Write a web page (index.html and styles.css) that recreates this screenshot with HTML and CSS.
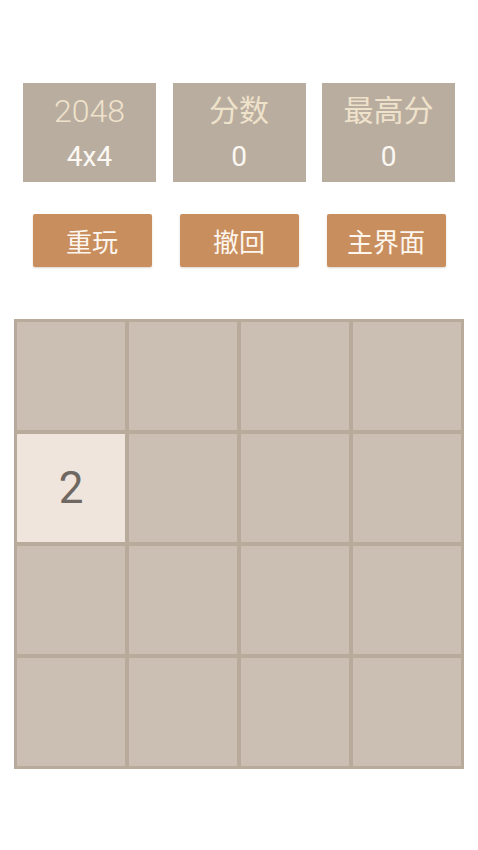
FILE: index.html
```html
<!DOCTYPE html>
<html lang="zh">
<head>
<meta charset="utf-8">
<title>2048</title>
<link rel="stylesheet" href="styles.css">
</head>
<body>
<div class="page">
  <div class="scores">
    <div class="box"><div class="title num">2048</div><div class="value">4x4</div></div>
    <div class="box"><div class="title">分数</div><div class="value">0</div></div>
    <div class="box"><div class="title">最高分</div><div class="value">0</div></div>
  </div>
  <div class="buttons">
    <div class="btn">重玩</div>
    <div class="btn">撤回</div>
    <div class="btn">主界面</div>
  </div>
  <div class="board">
    <div class="cell"></div><div class="cell"></div><div class="cell"></div><div class="cell"></div>
    <div class="cell tile2">2</div><div class="cell"></div><div class="cell"></div><div class="cell"></div>
    <div class="cell"></div><div class="cell"></div><div class="cell"></div><div class="cell"></div>
    <div class="cell"></div><div class="cell"></div><div class="cell"></div><div class="cell"></div>
  </div>
</div>
</body>
</html>
```
FILE: styles.css
```css
html, body {
  margin: 0;
  padding: 0;
  background: #ffffff;
}
body {
  font-family: Roboto, "Noto Sans CJK SC", sans-serif;
  width: 478px;
  height: 850px;
  overflow: hidden;
}
.page {
  display: flex;
  flex-direction: column;
  align-items: center;
  padding-top: 83px;
}
.scores {
  display: flex;
  gap: 16.5px;
}
.box {
  width: 133px;
  height: 99px;
  background: #b9ad9f;
  display: flex;
  flex-direction: column;
  align-items: center;
  box-sizing: border-box;
  padding-top: 8px;
}
.title {
  color: #efe2cb;
  font-size: 30px;
  line-height: 40px;
  font-weight: 400;
}
.title.num {
  font-size: 32px;
  font-weight: 300;
}
.value {
  color: #fbf8f3;
  font-size: 28px;
  line-height: 40px;
  margin-top: 6px;
}
.buttons {
  display: flex;
  gap: 28px;
  margin-top: 32px;
}
.btn {
  width: 119px;
  height: 53px;
  background: #c98e5d;
  border-radius: 2px;
  color: #fdf6ee;
  font-size: 26px;
  display: flex;
  align-items: center;
  justify-content: center;
  box-shadow: 0 1px 2px rgba(120, 90, 60, 0.25);
}
.board {
  margin-top: 52px;
  width: 450px;
  height: 450px;
  box-sizing: border-box;
  background: #b9ab9c;
  padding: 3px;
  display: grid;
  grid-template-columns: repeat(4, 1fr);
  grid-template-rows: repeat(4, 1fr);
  gap: 4px;
}
.cell {
  background: #cbbfb4;
  display: flex;
  align-items: center;
  justify-content: center;
}
.tile2 {
  background: #efe5dc;
  color: #6f6862;
  font-size: 44px;
  font-weight: 400;
}
```
